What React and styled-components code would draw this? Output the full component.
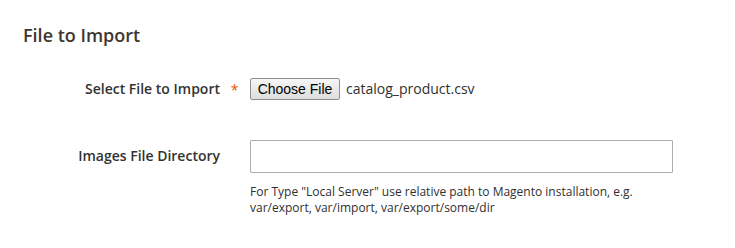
import React from "react";
import styled, { createGlobalStyle } from "styled-components";

const GlobalStyle = createGlobalStyle`
  body {
    margin: 0;
    background: #ffffff;
    font-family: "Open Sans", "Liberation Sans", sans-serif;
    color: #303030;
  }
`;

const Fieldset = styled.section`
  width: 735px;
  height: 248px;
  padding-top: 23px;
  box-sizing: border-box;
`;

const Legend = styled.h2`
  margin: 0 0 0 23px;
  font-size: 18px;
  line-height: 25px;
  font-weight: 600;
  color: #41362f;
`;

const Field = styled.div`
  display: flex;
  align-items: ${({ $top }) => ($top ? "flex-start" : "center")};
  margin-top: ${({ $gap }) => $gap}px;
`;

const Label = styled.label`
  width: 220px;
  flex: none;
  text-align: right;
  font-size: 14px;
  font-weight: 600;
  line-height: 20px;
  color: #333333;
  padding-top: ${({ $top }) => $top || 0}px;
`;

const Required = styled.span`
  width: 29px;
  flex: none;
  text-align: center;
  color: #eb5202;
  font-size: 14px;
  line-height: 20px;
  padding-top: 3px;
`;

const Control = styled.div`
  display: flex;
  flex-direction: column;
  margin-left: 1px;
`;

const FileRow = styled.div`
  display: flex;
  align-items: center;
  gap: 6px;
`;

const ChooseButton = styled.button`
  height: 22px;
  width: 90px;
  padding: 0;
  font-family: "Liberation Sans", Arial, sans-serif;
  font-size: 14px;
  color: #000;
  background: linear-gradient(#f6f6f6, #dddddd);
  border: 1px solid #8f8f8f;
  border-radius: 2px;
`;

const FileName = styled.span`
  font-size: 14px;
  color: #303030;
`;

const TextInput = styled.input`
  width: 423px;
  height: 33px;
  box-sizing: border-box;
  border: 1px solid #adadad;
  border-radius: 1px;
  background: #fff;
  padding: 0 10px;
  font-family: inherit;
  font-size: 14px;
`;

const Note = styled.div`
  margin-top: 11px;
  font-size: 12px;
  line-height: 16px;
  color: #303030;
`;

export default function App() {
  return (
    <>
      <GlobalStyle />
      <Fieldset>
        <Legend>File to Import</Legend>
        <Field $gap={29}>
          <Label>Select File to Import</Label>
          <Required>*</Required>
          <Control>
            <FileRow>
              <ChooseButton type="button">Choose File</ChooseButton>
              <FileName>catalog_product.csv</FileName>
            </FileRow>
          </Control>
        </Field>
        <Field $gap={40} $top>
          <Label $top={6}>Images File Directory</Label>
          <Required />
          <Control>
            <TextInput type="text" />
            <Note>
              For Type "Local Server" use relative path to Magento installation, e.g.
              <br />
              var/export, var/import, var/export/some/dir
            </Note>
          </Control>
        </Field>
      </Fieldset>
    </>
  );
}
